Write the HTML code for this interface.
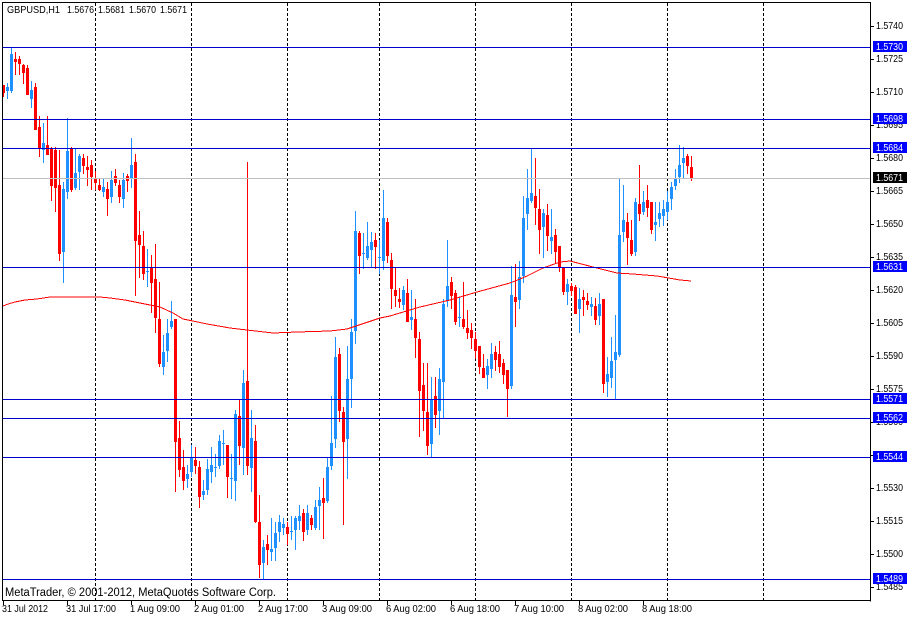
<!DOCTYPE html>
<html lang="en">
<head>
<meta charset="utf-8">
<title>GBPUSD,H1</title>
<style>
html,body{margin:0;padding:0;background:#fff;width:908px;height:617px;overflow:hidden}
svg{display:block;position:absolute;left:0;top:0}
text{font-family:"Liberation Sans",sans-serif;font-size:10.5px;fill:#000}
</style>
</head>
<body>
<svg width="908" height="617" viewBox="0 0 908 617" xmlns="http://www.w3.org/2000/svg" shape-rendering="crispEdges">
<rect width="908" height="617" fill="#fff"/>
<g transform="translate(.5 0)" fill="none" stroke="#000" stroke-width="1" stroke-dasharray="3 2">
<path d="M95 3V600M191 3V600M287 3V600M379 3V600M475 3V600M571 3V600M667 3V600M763 3V600"/>
</g>
<g transform="translate(.5 0)" fill="none">
<path stroke="#1e90ff" d="M7 83V99M11 48V93M31 81V108M43 123V163M63 182V283M67 118V199M75 148V190M79 154V190M103 178V197M111 171V203M123 173V208M131 138V188M147 249V287M163 335V375M167 319V362M171 301V329M187 465V488M191 445V477M203 480V500M207 459V495M211 447V483M215 454V477M219 435V469M223 430V465M231 454V499M235 410V501M243 370V475M251 410V492M263 540V580M271 518V561M275 522V561M279 515V542M283 518V535M291 516V540M295 516V550M299 505V530M307 505V535M315 500V530M319 487V530M327 458V503M331 396V470M335 337V448M347 346V479M351 319V408M355 211V344M363 233V269M367 222V260M371 232V268M379 240V274M383 190V270M403 286V310M411 290V330M431 377V457M439 368V435M443 299V418M447 240V307M459 297V327M487 359V389M491 343V378M511 266V389M519 261V309M523 196V283M527 169V230M531 148V203M543 209V258M551 209V254M567 279V305M579 288V333M591 297V316M599 293V325M607 357V397M611 337V388M615 315V399M619 178V357M623 185V242M635 198V256M643 191V215M655 202V241M659 202V227M663 200V226M667 191V220M671 182V210M675 169V190M679 145V183M683 147V179"/>
<path stroke="#ff0000" d="M3 85V97M15 52V75M19 56V75M23 64V84M27 65V95M35 83V130M39 116V157M47 116V155M51 147V201M55 147V212M59 150V261M71 147V192M83 154V174M87 156V186M91 160V190M95 171V190M99 178V191M107 182V216M115 169V186M119 180V203M127 174V192M135 154V296M139 211V278M143 231V280M151 255V313M155 244V333M159 282V367M175 319V492M179 421V477M183 450V490M195 447V474M199 461V508M227 445V498M239 400V465M247 162V475M255 425V523M259 495V578M267 535V565M287 522V545M303 509V541M311 515V530M323 478V539M339 348V422M343 407V525M359 231V274M375 233V269M387 218V263M391 253V309M395 267V307M399 288V308M407 279V322M415 299V358M419 332V437M423 363V431M427 363V455M435 377V428M451 277V309M455 290V325M463 282V329M467 310V339M471 323V349M475 332V359M479 346V374M483 354V378M495 346V371M499 341V373M503 359V384M507 370V417M515 264V327M535 158V225M539 189V254M547 204V251M555 229V263M559 246V272M563 268V295M571 283V296M575 285V314M583 290V316M587 293V310M595 298V325M603 299V393M627 213V265M631 220V256M639 165V221M647 185V217M651 202V234M687 154V174M691 156V181"/>
<path stroke="#1e90ff" stroke-width="3" d="M7 87V91M11 54V91M31 90V99M43 143V150M63 189V252M67 151V192M75 173V188M79 156V172M103 187V192M111 180V197M123 180V199M131 165V179M147 271V272M163 352V367M167 333V351M171 321V327M187 474V479M191 457V472M203 491V495M207 469V490M211 465V472M215 467V468M219 441V466M223 443V444M231 478V479M235 414V481M243 383V448M251 438V468M263 547V563M271 549V552M275 533V548M279 522V532M283 524V528M291 531V532M295 518V530M299 516V521M307 513V530M315 507V528M319 500V506M327 467V501M331 443V466M335 357V439M347 379V439M351 332V379M355 231V331M363 253V254M367 246V258M371 242V250M379 257V258M383 218V261M403 290V305M411 317V320M431 400V444M439 379V411M443 304V382M447 286V301M459 317V318M487 366V375M491 354V369M511 295V386M519 277V300M523 218V276M527 198V214M531 193V201M543 213V227M551 237V241M567 284V292M579 299V309M591 304V307M599 304V316M607 374V382M611 361V378M615 352V360M619 235V355M623 220V232M635 202V252M643 202V212M655 222V225M659 213V219M663 209V216M667 202V212M671 187V199M675 178V186M679 165V177M683 158V163"/>
<path stroke="#ff0000" stroke-width="3" d="M3 85V93M15 59V62M19 59V64M23 65V73M27 68V95M35 87V130M39 127V148M47 145V155M51 149V186M55 150V188M59 185V254M71 148V190M83 158V166M87 167V170M91 165V177M95 178V183M99 185V190M107 189V199M115 176V183M119 185V197M127 176V181M135 162V241M139 235V245M143 246V274M151 267V283M155 279V318M159 319V364M175 319V442M179 438V470M183 467V481M195 460V466M199 467V497M227 445V477M239 416V446M247 381V466M255 441V522M259 522V565M267 544V550M287 527V534M303 513V532M311 518V525M323 498V503M339 354V411M343 412V442M359 233V256M375 240V247M387 222V256M391 260V289M395 290V296M399 299V302M407 293V322M415 319V338M419 339V391M423 385V411M427 412V446M435 396V415M451 282V296M455 293V322M463 319V327M467 328V333M471 330V338M475 339V351M479 346V367M483 368V378M495 352V360M499 354V367M503 363V375M507 370V389M515 297V302M535 196V208M539 209V230M547 215V236M555 235V252M559 246V267M563 268V292M571 286V291M575 287V314M583 297V300M587 301V305M595 306V320M603 299V384M627 222V238M631 240V254M639 204V214M647 200V208M651 202V230M687 156V166M691 167V179"/>
</g>
<polyline fill="none" stroke="#ff0000" stroke-width="1" points="3,306 8,304 15,302 25,300 37,299 50,297 70,297 100,297 110,298 125,300 140,303 150,305 160,307 173,313 183,319 193,321 207,324 230,328 247,330 273,333 297,332 330,331 347,329 353,327 380,318 390,316 420,307 450,300 477,292 510,283 520,279 527,276 543,268 560,262 570,261 593,267 617,273 633,274 657,276 680,280 691,281"/>
<g transform="translate(0 .5)" fill="none" stroke-width="1">
<path stroke="#c0c0c0" d="M3 178H870"/>
<path stroke="#0000cd" d="M3 47H870M3 119H870M3 148H870M3 267H870M3 399H870M3 418H870M3 457H870M3 579H870"/>
<path stroke="#000" d="M2 2H871M2.5 2V600.5M870.5 2V601M2 600H871"/>
<path stroke="#000" transform="translate(0 -.5)" d="M871 26.5H874M871 59.5H874M871 92.5H874M871 125.5H874M871 158.5H874M871 191.5H874M871 224.5H874M871 257.5H874M871 290.5H874M871 323.5H874M871 356.5H874M871 389.5H874M871 422.5H874M871 455.5H874M871 488.5H874M871 521.5H874M871 554.5H874M871 587.5H874"/>
<path stroke="#000" transform="translate(0 -.5)" d="M3.5 601V605M67.5 601V605M131.5 601V605M195.5 601V605M259.5 601V605M323.5 601V605M387.5 601V605M451.5 601V605M515.5 601V605M579.5 601V605M643.5 601V605"/>
</g>
<g shape-rendering="auto" transform="translate(0 -1)">
<text x="7" y="14" textLength="53" lengthAdjust="spacingAndGlyphs">GBPUSD,H1</text>
<text x="67" y="14" textLength="27" lengthAdjust="spacingAndGlyphs">1.5676</text>
<text x="98" y="14" textLength="27" lengthAdjust="spacingAndGlyphs">1.5681</text>
<text x="129" y="14" textLength="27" lengthAdjust="spacingAndGlyphs">1.5670</text>
<text x="160" y="14" textLength="27" lengthAdjust="spacingAndGlyphs">1.5671</text>
<text x="5" y="597" style="font-size:11.5px" textLength="271" lengthAdjust="spacingAndGlyphs">MetaTrader, © 2001-2012, MetaQuotes Software Corp.</text>
<g>
<text x="876" y="30" textLength="27" lengthAdjust="spacingAndGlyphs">1.5740</text>
<text x="876" y="63" textLength="27" lengthAdjust="spacingAndGlyphs">1.5725</text>
<text x="876" y="96" textLength="27" lengthAdjust="spacingAndGlyphs">1.5710</text>
<text x="876" y="129" textLength="27" lengthAdjust="spacingAndGlyphs">1.5695</text>
<text x="876" y="162" textLength="27" lengthAdjust="spacingAndGlyphs">1.5680</text>
<text x="876" y="195" textLength="27" lengthAdjust="spacingAndGlyphs">1.5665</text>
<text x="876" y="228" textLength="27" lengthAdjust="spacingAndGlyphs">1.5650</text>
<text x="876" y="261" textLength="27" lengthAdjust="spacingAndGlyphs">1.5635</text>
<text x="876" y="294" textLength="27" lengthAdjust="spacingAndGlyphs">1.5620</text>
<text x="876" y="327" textLength="27" lengthAdjust="spacingAndGlyphs">1.5605</text>
<text x="876" y="360" textLength="27" lengthAdjust="spacingAndGlyphs">1.5590</text>
<text x="876" y="393" textLength="27" lengthAdjust="spacingAndGlyphs">1.5575</text>
<text x="876" y="426" textLength="27" lengthAdjust="spacingAndGlyphs">1.5560</text>
<text x="876" y="459" textLength="27" lengthAdjust="spacingAndGlyphs">1.5545</text>
<text x="876" y="492" textLength="27" lengthAdjust="spacingAndGlyphs">1.5530</text>
<text x="876" y="525" textLength="27" lengthAdjust="spacingAndGlyphs">1.5515</text>
<text x="876" y="558" textLength="27" lengthAdjust="spacingAndGlyphs">1.5500</text>
<text x="876" y="591" textLength="27" lengthAdjust="spacingAndGlyphs">1.5485</text>
</g>
<g>
<text x="2" y="613" textLength="46" lengthAdjust="spacingAndGlyphs">31 Jul 2012</text>
<text x="66" y="613" textLength="50" lengthAdjust="spacingAndGlyphs">31 Jul 17:00</text>
<text x="130" y="613" textLength="50" lengthAdjust="spacingAndGlyphs">1 Aug 09:00</text>
<text x="194" y="613" textLength="50" lengthAdjust="spacingAndGlyphs">2 Aug 01:00</text>
<text x="258" y="613" textLength="50" lengthAdjust="spacingAndGlyphs">2 Aug 17:00</text>
<text x="322" y="613" textLength="50" lengthAdjust="spacingAndGlyphs">3 Aug 09:00</text>
<text x="386" y="613" textLength="50" lengthAdjust="spacingAndGlyphs">6 Aug 02:00</text>
<text x="450" y="613" textLength="50" lengthAdjust="spacingAndGlyphs">6 Aug 18:00</text>
<text x="514" y="613" textLength="50" lengthAdjust="spacingAndGlyphs">7 Aug 10:00</text>
<text x="578" y="613" textLength="50" lengthAdjust="spacingAndGlyphs">8 Aug 02:00</text>
<text x="642" y="613" textLength="50" lengthAdjust="spacingAndGlyphs">8 Aug 18:00</text>
</g>
</g>
<g fill="#0000ff">
<rect x="873" y="41" width="34" height="11"/>
<rect x="873" y="113" width="34" height="11"/>
<rect x="873" y="142" width="34" height="11"/>
<rect x="873" y="261" width="34" height="11"/>
<rect x="873" y="393" width="34" height="11"/>
<rect x="873" y="412" width="34" height="11"/>
<rect x="873" y="451" width="34" height="11"/>
<rect x="873" y="573" width="34" height="11"/>
</g>
<rect x="873" y="172" width="34" height="11" fill="#000"/>
<g shape-rendering="auto" transform="translate(0 -1)">
<text style="fill:#fff" x="876" y="51" textLength="27" lengthAdjust="spacingAndGlyphs">1.5730</text>
<text style="fill:#fff" x="876" y="123" textLength="27" lengthAdjust="spacingAndGlyphs">1.5698</text>
<text style="fill:#fff" x="876" y="152" textLength="27" lengthAdjust="spacingAndGlyphs">1.5684</text>
<text style="fill:#fff" x="876" y="182" textLength="27" lengthAdjust="spacingAndGlyphs">1.5671</text>
<text style="fill:#fff" x="876" y="271" textLength="27" lengthAdjust="spacingAndGlyphs">1.5631</text>
<text style="fill:#fff" x="876" y="403" textLength="27" lengthAdjust="spacingAndGlyphs">1.5571</text>
<text style="fill:#fff" x="876" y="422" textLength="27" lengthAdjust="spacingAndGlyphs">1.5562</text>
<text style="fill:#fff" x="876" y="461" textLength="27" lengthAdjust="spacingAndGlyphs">1.5544</text>
<text style="fill:#fff" x="876" y="583" textLength="27" lengthAdjust="spacingAndGlyphs">1.5489</text>
</g>
</svg>
</body>
</html>
